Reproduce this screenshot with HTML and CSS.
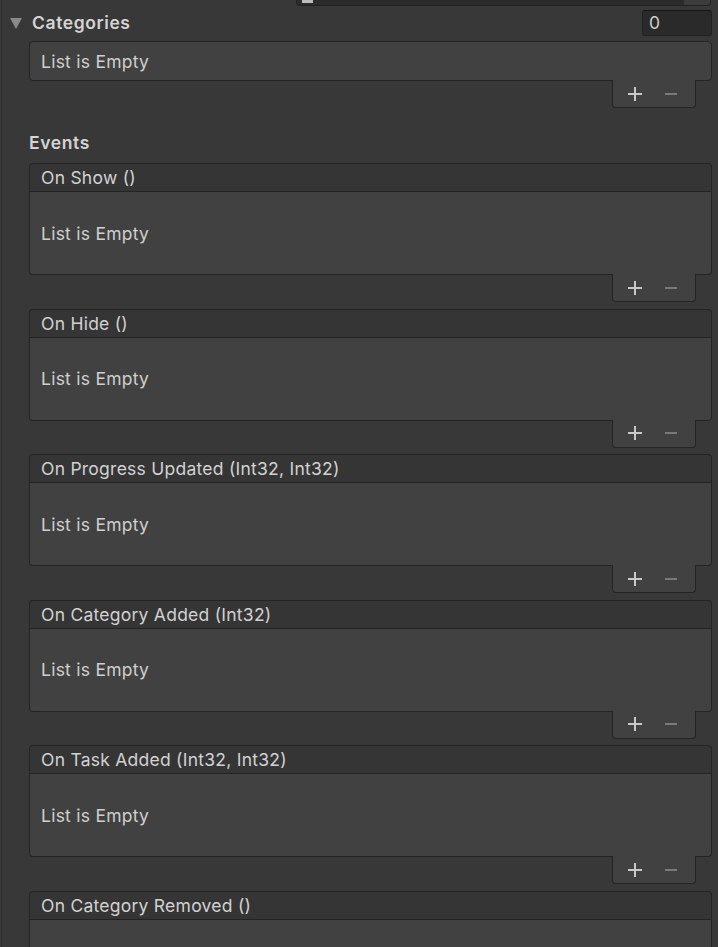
FILE: index.html
```html
<!DOCTYPE html>
<html>
<head>
<meta charset="utf-8">
<link rel="stylesheet" href="styles.css">
</head>
<body>
<div class="page">
  <div class="top-field"><span class="top-check"></span><span class="top-end"></span></div>

  <div class="foldout">
    <span class="tri"></span>
    <span class="foldout-label">Categories</span>
    <span class="num-field">0</span>
  </div>

  <div class="list-box"><span class="empty">List is Empty</span></div>
  <div class="list-footer"><span class="plus"></span><span class="minus"></span></div>

  <div class="section-label">Events</div>

  <div class="event">
    <div class="ev-head">On Show ()</div>
    <div class="ev-body"><span class="empty">List is Empty</span></div>
    <div class="list-footer"><span class="plus"></span><span class="minus"></span></div>
  </div>

  <div class="event">
    <div class="ev-head">On Hide ()</div>
    <div class="ev-body"><span class="empty">List is Empty</span></div>
    <div class="list-footer"><span class="plus"></span><span class="minus"></span></div>
  </div>

  <div class="event">
    <div class="ev-head">On Progress Updated (Int32, Int32)</div>
    <div class="ev-body"><span class="empty">List is Empty</span></div>
    <div class="list-footer"><span class="plus"></span><span class="minus"></span></div>
  </div>

  <div class="event">
    <div class="ev-head">On Category Added (Int32)</div>
    <div class="ev-body"><span class="empty">List is Empty</span></div>
    <div class="list-footer"><span class="plus"></span><span class="minus"></span></div>
  </div>

  <div class="event">
    <div class="ev-head">On Task Added (Int32, Int32)</div>
    <div class="ev-body"><span class="empty">List is Empty</span></div>
    <div class="list-footer"><span class="plus"></span><span class="minus"></span></div>
  </div>

  <div class="event">
    <div class="ev-head">On Category Removed ()</div>
    <div class="ev-body"><span class="empty">List is Empty</span></div>
    <div class="list-footer"><span class="plus"></span><span class="minus"></span></div>
  </div>
</div>
</body>
</html>
```

FILE: styles.css
```css
html, body {
  margin: 0;
  padding: 0;
  background: #383838;
  height: 947px;
  overflow: hidden;
}
.page {
  font-family: Inter, "Noto Sans", sans-serif;
  font-size: 17.5px;
  letter-spacing: 0.25px;
  color: #d2d2d2;
  border-left: 1px solid #2f2f2f;
  margin-left: 1px;
  min-height: 947px;
  display: flex;
  flex-direction: column;
}
.top-field {
  margin-left: 294px;
  margin-right: 7px;
  height: 5px;
  background: #2b2b2b;
  border: 1px solid #222;
  border-top: none;
  border-radius: 0 0 4px 4px;
  display: flex;
  justify-content: space-between;
}
.top-check {
  width: 11px;
  height: 3px;
  margin-left: 5px;
  background: #bdbdbd;
}
.top-end {
  width: 26px;
  background: #3c3c3c;
  border-radius: 0 0 3px 0;
}
.foldout {
  display: flex;
  align-items: center;
  height: 27px;
  margin-top: 3px;
  padding-left: 8px;
  padding-right: 6px;
}
.tri {
  width: 0;
  height: 0;
  border-left: 6px solid transparent;
  border-right: 6px solid transparent;
  border-top: 11px solid #8a8a8a;
  margin-right: 10px;
  margin-top: 1px;
}
.foldout-label {
  font-weight: 600;
  letter-spacing: 0.6px;
  flex: 1;
  color: #d4d4d4;
}
.num-field {
  width: 62px;
  height: 24px;
  line-height: 24px;
  padding-left: 6px;
  background: #2a2a2a;
  border: 1px solid #212121;
  border-top-color: #151515;
  border-radius: 3px;
  color: #cfcfcf;
}
.list-box {
  margin-left: 27px;
  margin-right: 6px;
  height: 38px;
  background: #414141;
  border: 1px solid #242424;
  border-radius: 4px;
  display: flex;
  align-items: center;
  padding-left: 11px;
  margin-top: 5px;
}
.empty {
  color: #cfcfcf;
}
.list-footer {
  align-self: flex-end;
  margin-right: 22px;
  width: 82px;
  height: 27px;
  margin-top: -1px;
  background: #414141;
  border: 1px solid #242424;
  border-top: none;
  border-radius: 0 0 4px 4px;
  display: flex;
  align-items: center;
}
.plus {
  position: relative;
  width: 14px;
  height: 14px;
  margin-left: 15px;
}
.plus::before, .plus::after {
  content: "";
  position: absolute;
  background: #c8c8c8;
}
.plus::before {
  left: 0;
  top: 6px;
  width: 14px;
  height: 2px;
}
.plus::after {
  left: 6px;
  top: 0;
  width: 2px;
  height: 14px;
}
.minus {
  width: 12px;
  height: 2px;
  margin-left: 23px;
  background: #7a7a7a;
}
.section-label {
  font-weight: 600;
  letter-spacing: 0.6px;
  margin-left: 27px;
  margin-top: 24px;
  height: 21px;
  line-height: 21px;
  color: #d4d4d4;
}
.event {
  display: flex;
  flex-direction: column;
  margin-bottom: 6.5px;
}
.section-label + .event {
  margin-top: 10px;
}
.ev-head {
  margin-left: 27px;
  margin-right: 6px;
  height: 27px;
  line-height: 27px;
  padding-left: 11px;
  background: #353535;
  border: 1px solid #242424;
  border-bottom: 1px solid #232323;
  border-radius: 4px 4px 0 0;
}
.ev-body {
  margin-left: 27px;
  margin-right: 6px;
  height: 82px;
  background: #414141;
  border: 1px solid #242424;
  border-top: none;
  border-radius: 0 0 4px 4px;
  display: flex;
  align-items: center;
  padding-left: 11px;
}
```
